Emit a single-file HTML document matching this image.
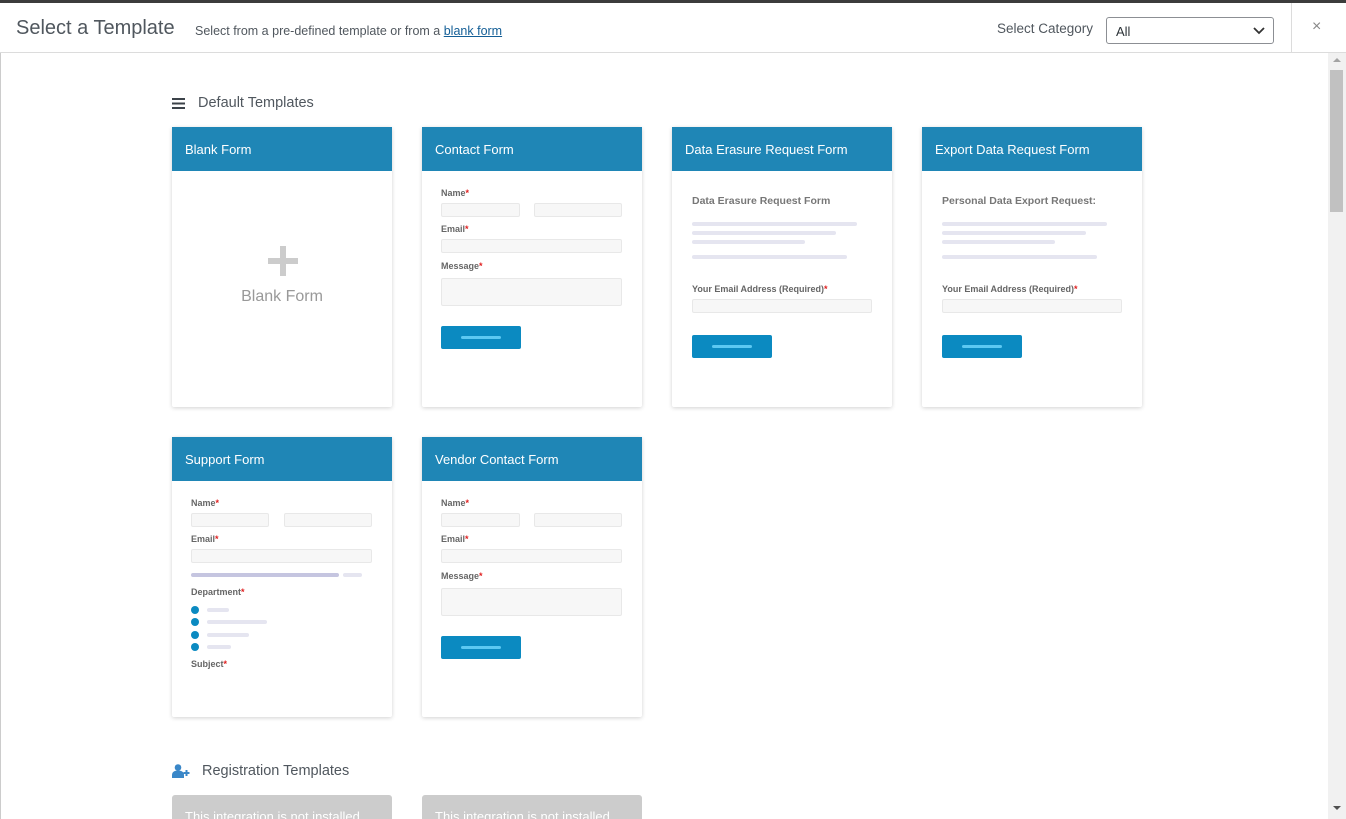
<!DOCTYPE html>
<html style="width:1346px;height:819px;overflow:hidden"><head><meta charset="utf-8"><style>
*{box-sizing:border-box;margin:0;padding:0}
body{width:1346px;height:819px;overflow:hidden;background:#fff;font-family:"Liberation Sans",sans-serif;position:relative}
.abs{position:absolute}
.card{position:absolute;width:220px;height:280px;background:#fff;box-shadow:0 1px 4px rgba(0,0,0,.18);border-radius:2px}
.ch{height:44px;background:#1f86b6;color:#fff;font-size:13px;padding:15px 0 0 13px}
.lbl{position:absolute;font-size:9px;font-weight:bold;color:#666}
.lbl b{color:#e02020}
.in{position:absolute;height:14px;background:#f7f7f7;border:1px solid #e8e8e8;border-radius:2px}
.btn{position:absolute;width:80px;height:23px;background:#0b8ac1;border-radius:2px}
.btn:after{content:"";position:absolute;left:20px;top:10px;width:40px;height:3px;border-radius:2px;background:#5cc8f2}
.ln{position:absolute;height:4px;border-radius:2px;background:#e5e5f0}
.dot{position:absolute;width:8px;height:8px;border-radius:50%;background:#0b8ac1}
</style></head><body>
<div class="abs" style="left:0;top:0;width:1346px;height:3px;background:#3c3c3c"></div>
<div class="abs" style="left:0;top:52px;width:1346px;height:1px;background:#dcdcdc"></div>
<div class="abs" style="left:0;top:53px;width:1px;height:766px;background:#ccc"></div>
<div class="abs" style="left:16px;top:17px;font-size:20px;color:#50575e">Select a Template</div>
<div class="abs" style="left:195px;top:24px;font-size:12.5px;color:#50575e">Select from a pre-defined template or from a <span style="color:#135e96;text-decoration:underline">blank form</span></div>
<div class="abs" style="left:997px;top:21px;font-size:13.5px;color:#50575e">Select Category</div>
<div class="abs" style="left:1106px;top:17px;width:168px;height:27px;border:1px solid #8c8f94;border-radius:3px;font-size:13px;color:#2c3338;padding:6px 0 0 9px">All
<svg class="abs" style="right:8px;top:9px" width="12" height="8" viewBox="0 0 12 8"><path d="M1 1l5 5 5-5" fill="none" stroke="#333" stroke-width="1.8"/></svg></div>
<div class="abs" style="left:1291px;top:3px;width:1px;height:49px;background:#dcdcdc"></div>
<div class="abs" style="left:1312px;top:18px;font-size:16px;color:#888">×</div>
<div class="abs" style="left:1328px;top:53px;width:18px;height:766px;background:#f1f1f1"></div>
<div class="abs" style="left:1330px;top:70px;width:13px;height:142px;background:#c1c1c1"></div>
<div class="abs" style="left:1333px;top:58px;width:0;height:0;border:4px solid transparent;border-bottom-color:#a3a3a3;border-top:0"></div>
<div class="abs" style="left:1333px;top:806px;width:0;height:0;border:4px solid transparent;border-top-color:#505050;border-bottom:0"></div>

<svg class="abs" style="left:172px;top:98px" width="13" height="11"><rect y="0" width="13" height="2" fill="#3c434a"/><rect y="4.5" width="13" height="2" fill="#3c434a"/><rect y="9" width="13" height="2" fill="#3c434a"/></svg>
<div class="abs" style="left:198px;top:95px;font-size:14.5px;color:#50575e">Default Templates</div>

<div class="card" style="left:172px;top:127px"><div class="ch">Blank Form</div>
<div class="abs" style="left:96px;top:131px;width:30px;height:6px;background:#ccc"></div>
<div class="abs" style="left:108px;top:119px;width:6px;height:30px;background:#ccc"></div>
<div class="abs" style="left:0;width:220px;top:161px;text-align:center;font-size:16px;color:#999">Blank Form</div></div>

<div class="card" style="left:422px;top:127px"><div class="ch">Contact Form</div>
<div class="lbl" style="left:19px;top:61px">Name<b>*</b></div>
<div class="in" style="left:19px;top:76px;width:79px"></div><div class="in" style="left:112px;top:76px;width:88px"></div>
<div class="lbl" style="left:19px;top:97px">Email<b>*</b></div>
<div class="in" style="left:19px;top:112px;width:181px"></div>
<div class="lbl" style="left:19px;top:134px">Message<b>*</b></div>
<div class="in" style="left:19px;top:151px;width:181px;height:28px"></div>
<div class="btn" style="left:19px;top:199px"></div></div>

<div class="card" style="left:672px;top:127px"><div class="ch">Data Erasure Request Form</div>
<div class="lbl" style="left:20px;top:68px;font-size:10.5px;color:#777">Data Erasure Request Form</div>
<div class="ln" style="left:20px;top:95px;width:165px"></div><div class="ln" style="left:20px;top:104px;width:144px"></div><div class="ln" style="left:20px;top:113px;width:113px"></div><div class="ln" style="left:20px;top:128px;width:155px"></div>
<div class="lbl" style="left:20px;top:157px">Your Email Address (Required)<b>*</b></div>
<div class="in" style="left:20px;top:172px;width:180px"></div>
<div class="btn" style="left:20px;top:208px"></div></div>

<div class="card" style="left:922px;top:127px"><div class="ch">Export Data Request Form</div>
<div class="lbl" style="left:20px;top:68px;font-size:10.5px;color:#777">Personal Data Export Request:</div>
<div class="ln" style="left:20px;top:95px;width:165px"></div><div class="ln" style="left:20px;top:104px;width:144px"></div><div class="ln" style="left:20px;top:113px;width:113px"></div><div class="ln" style="left:20px;top:128px;width:155px"></div>
<div class="lbl" style="left:20px;top:157px">Your Email Address (Required)<b>*</b></div>
<div class="in" style="left:20px;top:172px;width:180px"></div>
<div class="btn" style="left:20px;top:208px"></div></div>

<div class="card" style="left:172px;top:437px"><div class="ch">Support Form</div>
<div class="lbl" style="left:19px;top:61px">Name<b>*</b></div>
<div class="in" style="left:19px;top:76px;width:78px"></div><div class="in" style="left:112px;top:76px;width:88px"></div>
<div class="lbl" style="left:19px;top:97px">Email<b>*</b></div>
<div class="in" style="left:19px;top:112px;width:181px"></div>
<div class="ln" style="left:19px;top:136px;width:148px;background:#c5c5e0"></div><div class="ln" style="left:171px;top:136px;width:19px"></div>
<div class="lbl" style="left:19px;top:150px">Department<b>*</b></div>
<div class="dot" style="left:19px;top:169px"></div><div class="ln" style="left:35px;top:171px;width:22px"></div>
<div class="dot" style="left:19px;top:181px"></div><div class="ln" style="left:35px;top:183px;width:60px"></div>
<div class="dot" style="left:19px;top:194px"></div><div class="ln" style="left:35px;top:196px;width:42px"></div>
<div class="dot" style="left:19px;top:206px"></div><div class="ln" style="left:35px;top:208px;width:24px"></div>
<div class="lbl" style="left:19px;top:222px">Subject<b>*</b></div></div>

<div class="card" style="left:422px;top:437px"><div class="ch">Vendor Contact Form</div>
<div class="lbl" style="left:19px;top:61px">Name<b>*</b></div>
<div class="in" style="left:19px;top:76px;width:79px"></div><div class="in" style="left:112px;top:76px;width:88px"></div>
<div class="lbl" style="left:19px;top:97px">Email<b>*</b></div>
<div class="in" style="left:19px;top:112px;width:181px"></div>
<div class="lbl" style="left:19px;top:134px">Message<b>*</b></div>
<div class="in" style="left:19px;top:151px;width:181px;height:28px"></div>
<div class="btn" style="left:19px;top:199px"></div></div>

<svg class="abs" style="left:172px;top:764px" width="18" height="14" viewBox="0 0 18 14"><circle cx="6" cy="3.5" r="3.3" fill="#3a87c8"/><path d="M0 14v-3c0-3 2.5-4.5 6-4.5s6 1.5 6 4.5v3z" fill="#3a87c8"/><path d="M14.5 6v6M11.5 9h6" stroke="#3a87c8" stroke-width="2"/></svg>
<div class="abs" style="left:202px;top:763px;font-size:14.5px;color:#50575e">Registration Templates</div>
<div class="abs" style="left:172px;top:795px;width:220px;height:24px;overflow:hidden;background:#ccc;border-radius:3px 3px 0 0;color:#fff;font-size:13px;padding:14px 0 0 13px;white-space:nowrap">This integration is not installed</div>
<div class="abs" style="left:422px;top:795px;width:220px;height:24px;overflow:hidden;background:#ccc;border-radius:3px 3px 0 0;color:#fff;font-size:13px;padding:14px 0 0 13px;white-space:nowrap">This integration is not installed</div>
</body></html>
